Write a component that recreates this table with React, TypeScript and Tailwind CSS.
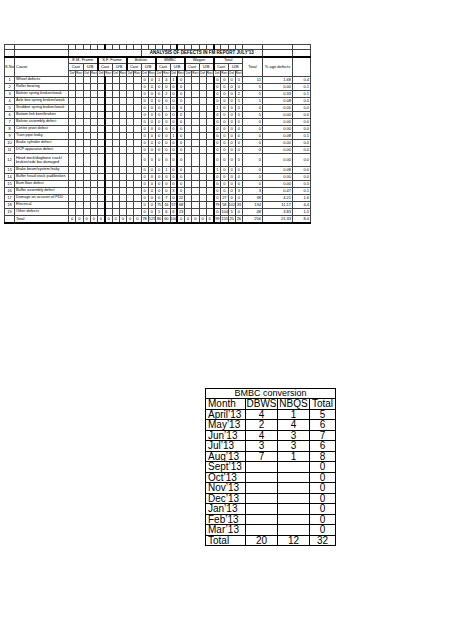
import React from 'react';

const causes: string[] = [
  'Wheel defects',
  'Roller bearing',
  'Bolster spring broken/weak',
  'Axle box spring broken/weak',
  'Snubber spring broken/weak',
  'Bottom link bent/broken',
  'Bolster assembly defect',
  'Centre pivot defect',
  'Train pipe leaky',
  'Brake cylinder defect',
  'DCP apparatus defect',
  'Head stock/dogbone crack/ broken/side bar damaged',
  'Brake beam/system leaky',
  'Buffer head stock pad/broken',
  'Bum floor defect',
  'Buffer assembly defect',
  'Damage on account of PDD',
  'Electrical',
  'Other defects',
];

// values for narrow cols 10..15 and 20..23, then total, %age, last
type Row = { a: string[]; b: string[]; t: string; p: string; q: string };
const rows: Row[] = [
  { a: ['0', '0', '1', '4', '1', '0'], b: ['0', '0', '0', '5'], t: '11', p: '1.68', q: '0.4' },
  { a: ['0', '0', '0', '0', '0', '0'], b: ['0', '0', '0', '0'], t: '5', p: '0.00', q: '0.1' },
  { a: ['0', '0', '0', '2', '0', '0'], b: ['0', '0', '0', '2'], t: '5', p: '0.33', q: '0.1' },
  { a: ['0', '0', '0', '0', '0', '0'], b: ['0', '0', '0', '1'], t: '1', p: '0.08', q: '0.0' },
  { a: ['0', '0', '0', '1', '0', '0'], b: ['1', '0', '0', '0'], t: '0', p: '0.00', q: '0.0' },
  { a: ['0', '0', '0', '0', '0', '0'], b: ['0', '0', '0', '0'], t: '5', p: '0.00', q: '0.0' },
  { a: ['0', '0', '0', '0', '0', '0'], b: ['0', '0', '0', '0'], t: '0', p: '0.00', q: '0.0' },
  { a: ['0', '0', '0', '0', '0', '0'], b: ['0', '0', '0', '0'], t: '0', p: '0.00', q: '0.0' },
  { a: ['0', '0', '0', '0', '1', '0'], b: ['0', '0', '0', '0'], t: '0', p: '0.08', q: '0.1' },
  { a: ['0', '0', '0', '0', '0', '0'], b: ['0', '0', '0', '0'], t: '0', p: '0.00', q: '0.0' },
  { a: ['0', '0', '0', '0', '0', '0'], b: ['0', '0', '0', '0'], t: '0', p: '0.00', q: '0.0' },
  { a: ['0', '0', '0', '0', '0', '0'], b: ['0', '0', '0', '0'], t: '0', p: '0.00', q: '0.0' },
  { a: ['0', '0', '0', '1', '0', '0'], b: ['1', '0', '0', '0'], t: '0', p: '0.08', q: '0.0' },
  { a: ['0', '0', '0', '0', '0', '0'], b: ['0', '0', '0', '0'], t: '0', p: '0.00', q: '0.0' },
  { a: ['0', '0', '0', '0', '0', '0'], b: ['0', '0', '0', '0'], t: '0', p: '0.00', q: '0.0' },
  { a: ['0', '0', '0', '0', '3', '0'], b: ['0', '0', '0', '3'], t: '3', p: '0.47', q: '0.1' },
  { a: ['0', '0', '0', '7', '0', '22'], b: ['0', '27', '0', '0'], t: '38', p: '4.21', q: '1.6' },
  { a: ['0', '0', '75', '16', '57', '68'], b: ['79', '58', '102', '33'], t: '134', p: '11.17', q: '4.4' },
  { a: ['0', '0', '5', '6', '6', '23'], b: ['0', '104', '5', '0'], t: '48', p: '3.83', q: '1.5' },
];

const totalNarrow = [
  '0', '0', '0', '0', '0', '0', '0', '0', '0', '0',
  '78', '125', '80', '60', '100', '0', '0', '0', '0', '0',
  '99', '155', '25', '26',
];

const groups = ['E.M. Frame', 'S.F. Frame', 'Bolster', 'BMBC', 'Wagon', 'Total'];
const subs = ['Cast', 'U/B'];

const thickAfter = (i: number) => i === 4 || i === 14 || i === 19;

const cellBase = 'border border-[#444] p-0 text-center align-middle overflow-hidden';
const nw = 'whitespace-nowrap';

function NarrowCells({ vals }: { vals: (string | undefined)[] }) {
  return (
    <>
      {vals.map((v, i) => (
        <td key={i} className={`${cellBase} ${nw} ${thickAfter(i) ? 'border-r-2 border-r-black' : ''}`}>
          {v ?? ''}
        </td>
      ))}
    </>
  );
}

function DefectTable() {
  const empty24 = Array.from({ length: 24 }, () => undefined);
  return (
    <table
      className="w-[306px] table-fixed border-collapse text-[4px] leading-none text-black"
      style={{ fontFamily: '"Liberation Sans", Arial, sans-serif' }}
    >
      <colgroup>
        <col className="w-[10px]" />
        <col className="w-[54px]" />
        {empty24.map((_, i) => (
          <col key={i} className="w-[7.25px]" />
        ))}
        <col className="w-[20px]" />
        <col className="w-[30px]" />
        <col className="w-[18px]" />
      </colgroup>
      <tbody>
        <tr className="h-[5px]">
          <td className={cellBase} />
          <td className={cellBase} />
          <NarrowCells vals={empty24} />
          <td className={cellBase} />
          <td className={cellBase} />
          <td className={cellBase} />
        </tr>
        <tr className="h-[7px] border-b-2 border-b-black">
          <td className={cellBase} />
          <td className={cellBase} />
          <td className={cellBase} colSpan={10} />
          <td className={`${cellBase} ${nw} font-bold text-[4.5px]`} colSpan={15}>
            ANALYSIS OF DEFECTS IN FM REPORT JULY&apos;13
          </td>
          <td className={cellBase} />
          <td className={cellBase} />
        </tr>
        <tr className="h-[7px]">
          <td className={`${cellBase} ${nw}`} rowSpan={3}>
            S.No.
          </td>
          <td className={`${cellBase} ${nw} text-left pl-[1px]`} rowSpan={3}>
            Cause
          </td>
          {groups.map((g, i) => (
            <td
              key={i}
              className={`${cellBase} ${nw} ${i < 5 ? 'border-r-2 border-r-black' : ''}`}
              colSpan={4}
            >
              {g}
            </td>
          ))}
          <td className={`${cellBase} ${nw}`} rowSpan={3}>
            Total
          </td>
          <td className={`${cellBase} ${nw}`} rowSpan={3}>
            % age defects
          </td>
          <td className={cellBase} rowSpan={3} />
        </tr>
        <tr className="h-[7px]">
          {Array.from({ length: 12 }, (_, i) => (
            <td
              key={i}
              className={`${cellBase} ${nw} ${i % 2 === 1 && i < 11 ? 'border-r-2 border-r-black' : ''}`}
              colSpan={2}
            >
              {subs[i % 2]}
            </td>
          ))}
        </tr>
        <tr className="h-[6px]">
          {Array.from({ length: 24 }, (_, i) => (
            <td key={i} className={`${cellBase} ${nw} text-[3px]`}>
              {i % 2 === 0 ? 'Def' : 'Rect'}
            </td>
          ))}
        </tr>
        {rows.map((r, idx) => {
          const vals: (string | undefined)[] = [
            ...Array.from({ length: 10 }, () => undefined),
            ...r.a,
            undefined,
            undefined,
            undefined,
            undefined,
            ...r.b,
          ];
          const tall = idx === 11;
          return (
            <tr key={idx} className={tall ? 'h-[13px]' : 'h-[7px]'}>
              <td className={`${cellBase} ${nw}`}>{idx + 1}</td>
              <td
                className={`${cellBase} text-left pl-[1px] text-[3.8px] ${tall ? 'whitespace-normal leading-[4.5px]' : nw}`}
              >
                {causes[idx]}
              </td>
              <NarrowCells vals={vals} />
              <td className={`${cellBase} ${nw} text-right pr-[1px]`}>{r.t}</td>
              <td className={`${cellBase} ${nw} text-right pr-[1px]`}>{r.p}</td>
              <td className={`${cellBase} ${nw} text-right pr-[1px]`}>{r.q}</td>
            </tr>
          );
        })}
        <tr className="h-[7px] border-b-2 border-b-black">
          <td className={cellBase} />
          <td className={`${cellBase} ${nw} text-left pl-[1px]`}>Total</td>
          <NarrowCells vals={totalNarrow} />
          <td className={`${cellBase} ${nw} text-right pr-[1px]`}>256</td>
          <td className={`${cellBase} ${nw} text-right pr-[1px]`}>21.33</td>
          <td className={`${cellBase} ${nw} text-right pr-[1px]`}>8.4</td>
        </tr>
      </tbody>
    </table>
  );
}

const bmbc: [string, string, string, string][] = [
  ['April\u201913', '4', '1', '5'],
  ['May\u201913', '2', '4', '6'],
  ['Jun\u201913', '4', '3', '7'],
  ['Jul\u201913', '3', '3', '6'],
  ['Aug\u201913', '7', '1', '8'],
  ['Sept\u201913', '', '', '0'],
  ['Oct\u201913', '', '', '0'],
  ['Nov\u201913', '', '', '0'],
  ['Dec\u201913', '', '', '0'],
  ['Jan\u201913', '', '', '0'],
  ['Feb\u201913', '', '', '0'],
  ['Mar\u201913', '', '', '0'],
];

function BmbcTable() {
  const c = 'border border-black p-0 whitespace-nowrap';
  return (
    <table
      className="w-[130px] table-fixed border-collapse text-[10px] leading-[9px] text-black"
      style={{ fontFamily: '"Liberation Sans", Arial, sans-serif' }}
    >
      <colgroup>
        <col className="w-[40px]" />
        <col className="w-[32px]" />
        <col className="w-[32px]" />
        <col className="w-[26px]" />
      </colgroup>
      <tbody>
        <tr className="h-[10px]">
          <td className={`${c} text-center text-[9px]`} colSpan={4}>
            BMBC conversion
          </td>
        </tr>
        <tr className="h-[11px]">
          <td className={`${c} pl-[2px] text-left`}>Month</td>
          <td className={`${c} text-center`}>DBWS</td>
          <td className={`${c} text-center`}>NBQS</td>
          <td className={`${c} text-center`}>Total</td>
        </tr>
        {bmbc.map((r, i) => (
          <tr key={i} className="h-[10.5px]">
            <td className={`${c} pl-[2px] text-left`}>{r[0]}</td>
            <td className={`${c} text-center`}>{r[1]}</td>
            <td className={`${c} text-center`}>{r[2]}</td>
            <td className={`${c} text-center`}>{r[3]}</td>
          </tr>
        ))}
        <tr className="h-[10.5px]">
          <td className={`${c} pl-[2px] text-left`}>Total</td>
          <td className={`${c} text-center`}>20</td>
          <td className={`${c} text-center`}>12</td>
          <td className={`${c} text-center`}>32</td>
        </tr>
      </tbody>
    </table>
  );
}

export default function App() {
  return (
    <div className="w-[474px] h-[632px] bg-white overflow-hidden">
      <div className="pt-[44px] pl-[4px]">
        <DefectTable />
      </div>
      <div className="pt-[164px] pl-[205px]">
        <BmbcTable />
      </div>
    </div>
  );
}
